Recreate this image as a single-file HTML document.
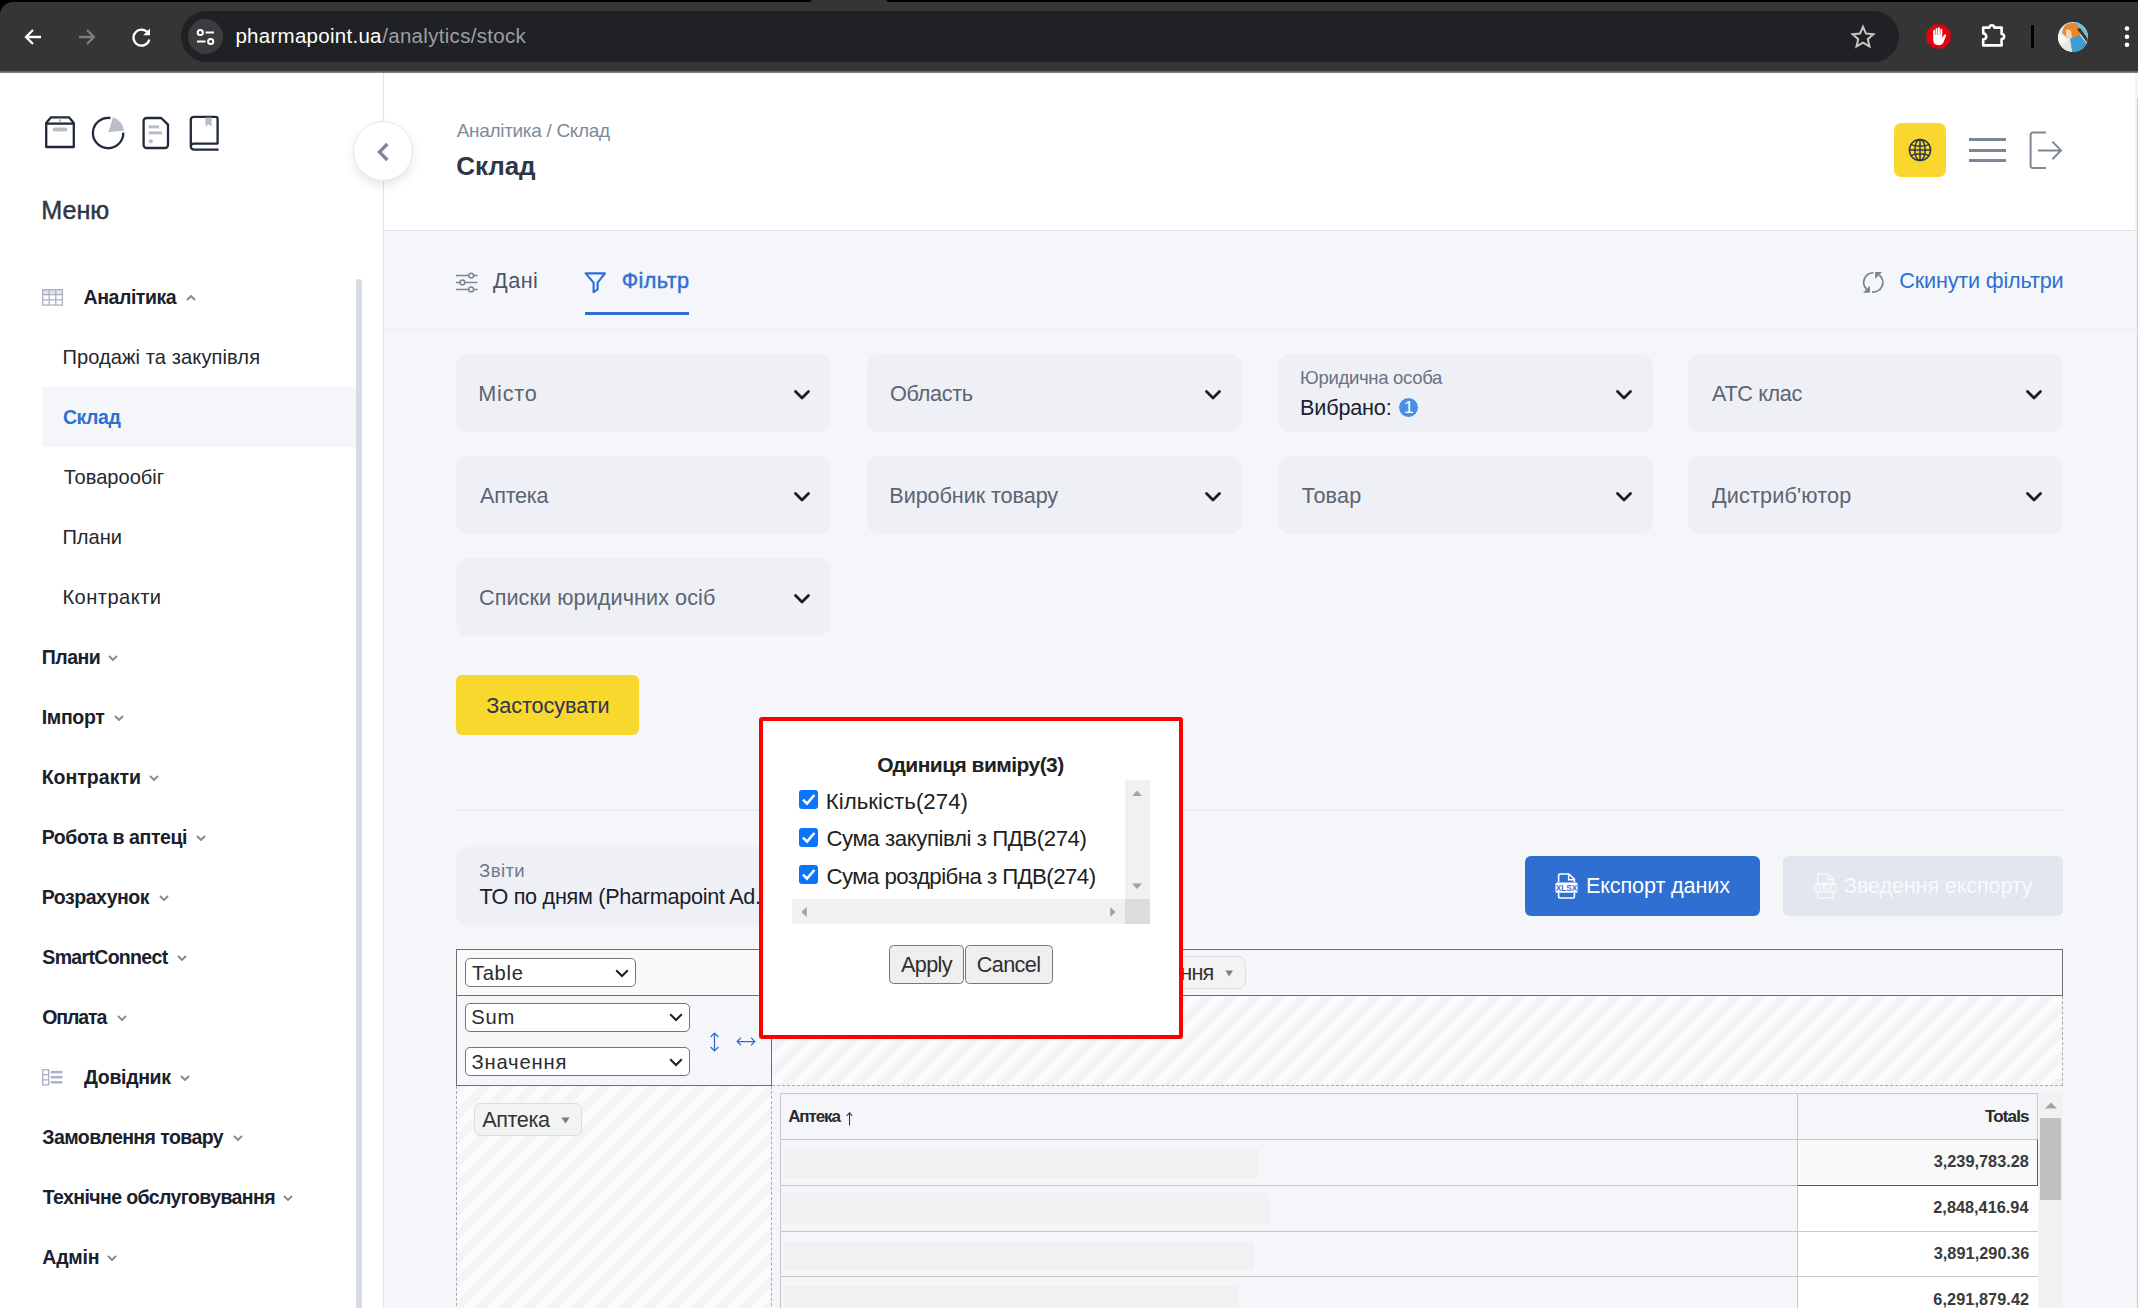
<!DOCTYPE html><html lang="uk"><head><meta charset="utf-8"><title>Склад — Pharmapoint</title><style>

*{box-sizing:border-box;margin:0;padding:0}
html,body{width:2138px;height:1308px;overflow:hidden;background:#fff}
body{font-family:"Liberation Sans",sans-serif;position:relative;color:#1a202c}
.abs,.t,svg.i{position:absolute}
.t{white-space:nowrap;display:block}
.med{-webkit-text-stroke:0.45px currentColor}
svg.i{overflow:visible}
/* browser chrome */
#chrome{left:0;top:0;width:2138px;height:73px;background:#000}
#toolbar{left:0;top:2px;width:2138px;height:69px;background:#353535;border-top-left-radius:13px}
#tabgap{left:806px;top:0;width:86px;height:3px;background:#353535;border-radius:0 0 0 0;clip-path:polygon(0 100%,4px 60%,6px 0,80px 0,82px 60%,100% 100%)}
#tbline{left:0;top:71px;width:2138px;height:2px;background:linear-gradient(#5a5a5a,#8d8d8d)}
#omni{left:181px;top:11px;width:1718px;height:51px;border-radius:26px;background:#202124}
#tune{left:188px;top:19px;width:35px;height:35px;border-radius:50%;background:#3b3c3e}
/* sidebar */
#side{left:0;top:73px;width:383px;height:1235px;background:#fff}
#sideline{left:383px;top:73px;width:1px;height:1235px;background:#dfe3ea}
#sidescroll{left:356px;top:279px;width:6px;height:1040px;border-radius:3px;background:#d5dce6}
#active{left:42px;top:387px;width:314px;height:60px;background:#f5f6fa}
#collapse{left:353px;top:121px;width:60px;height:60px;border-radius:50%;background:#fff;border:1px solid #e3e7ee;box-shadow:0 5px 10px rgba(60,70,90,.12)}
/* main */
#main{left:384px;top:73px;width:1754px;height:1235px;background:#f5f6fa}
#head{left:384px;top:73px;width:1754px;height:157px;background:#fff}
#headline{left:384px;top:230px;width:1754px;height:1px;background:#dde2ea}
#tabline{left:384px;top:329px;width:1754px;height:1px;background:#eceef2}
#tabul{left:585px;top:312px;width:104px;height:3px;background:#2f6fd1}
#rightedge{left:2135px;top:73px;width:3px;height:1235px;background:#f3f4f7}
#rightedge2{left:2137px;top:98px;width:1px;height:1210px;background:#c9ccd2}
.sel{background:#eef0f5;border-radius:12px;width:374.5px;height:78px}
#lang{left:1894px;top:123px;width:52px;height:54px;border-radius:7px;background:#f9d72f}
.hb{left:1969px;width:37px;height:3px;background:#7b8799}
#applybtn{left:456px;top:675px;width:183px;height:60px;border-radius:6px;background:#f9d82d}
#divider{left:456px;top:810px;width:1607px;height:1px;background:#e6e9ee}
#zv{left:456px;top:847px;width:375px;height:78px;border-radius:12px;background:#eef0f5}
#exp1{left:1525px;top:856px;width:235px;height:60px;border-radius:6px;background:#2f6fd1}
#exp2{left:1783px;top:856px;width:280px;height:60px;border-radius:6px;background:#e2e6ee}
.badge{left:1397.6px;top:396.5px;width:21.8px;height:21.8px;border-radius:50%;background:#4a90e2;border:1px solid #fff}
/* pivot */
#pvtTop{left:456px;top:949px;width:1607px;height:47px;border:1px solid #6d6d6d;background:#f5f6fa}
#pvtTL{left:457px;top:950px;width:314px;height:45px;background:#f9f9f9}
#pvtLeft{left:456px;top:996px;width:316px;height:90px;border:1px solid #6d6d6d;border-top:none;background:#f5f6fa}
#pvtTopSep{left:771px;top:949px;width:1px;height:47px;background:#6d6d6d}
.hatch{background-color:#fafbfd;background-image:linear-gradient(135deg,#f3f4f6 25%,transparent 25%,transparent 50%,#f3f4f6 50%,#f3f4f6 75%,transparent 75%);background-size:24px 24px}
#pvtCols{left:772px;top:996px;width:1291px;height:90px;border-right:1px dashed #a9a9a9;border-bottom:1px dashed #a9a9a9}
#pvtRows{left:456px;top:1086px;width:316px;height:230px;border-left:1px dashed #a9a9a9;border-right:1px dashed #a9a9a9}
.psel{background:#fff;border:1px solid #767676;border-radius:5px;height:29px}
.chip{background:#f3f3f3;border:1px solid #dedede;border-radius:6px}
#res{left:780px;top:1093px;width:1258px;height:230px;border:1px solid #c8c8c8;border-bottom:none;background:#f5f6fa}
.rl{left:781px;width:1257px;height:1px;background:#c8c8c8}
.bar{left:784px;height:29px;background:#f1f1f1}
#totcol{left:1797px;top:1093px;width:1px;height:230px;background:#c8c8c8}
.tc{left:1798px;width:240px;background:#fff}
#tc1{left:1797px;top:1139px;width:241px;height:47px;background:#f9f9f9;border:1px solid #5a5a5a;border-top-color:#c8c8c8;border-left-color:#c8c8c8}
#vtrack{left:2039px;top:1093px;width:24px;height:230px;background:#f1f1f1}
#vthumb{left:2040px;top:1118px;width:21px;height:82px;background:#c1c1c1}
/* modal */
#modal{left:759px;top:717px;width:424px;height:322px;background:#fff;border:4px solid #ff0000;border-radius:3px}
#mlist{left:792px;top:780px;width:358px;height:144px;background:#fff}
#mvs{left:1125px;top:780px;width:25px;height:119px;background:#f1f1f1}
#mhs{left:792px;top:899px;width:333px;height:25px;background:#f1f1f1}
#mcorner{left:1125px;top:899px;width:25px;height:25px;background:#dcdcdc}
.cb{width:19px;height:19px;border-radius:3px;background:#0b74fb}
.mbtn{top:945px;height:39.2px;background:#efefef;border:1.2px solid #787878;border-radius:4.5px}

</style></head><body>
<div class="abs" id="chrome"></div><div class="abs" id="toolbar"></div><div class="abs" id="tabgap"></div><div class="abs" id="tbline"></div>
<div class="abs" id="omni"></div><div class="abs" id="tune"></div>
<svg class="i" style="left:24px;top:28px" width="18" height="18" viewBox="0 0 18 18" ><path d="M17 9 H2.5 M9 2 L2 9 L9 16" fill="none" stroke="#fff" stroke-width="2.3"/></svg>
<svg class="i" style="left:78px;top:28px" width="18" height="18" viewBox="0 0 18 18" ><path d="M1 9 H15.5 M9 2 L16 9 L9 16" fill="none" stroke="#7d7d7d" stroke-width="2.3"/></svg>
<svg class="i" style="left:131px;top:27px" width="21" height="21" viewBox="0 0 21 21" ><path d="M17.2 6.2 A8 8 0 1 0 18.3 12.4" fill="none" stroke="#fff" stroke-width="2.3"/><path d="M19 1.5 V8.3 H12.2 Z" fill="#fff"/></svg>
<svg class="i" style="left:196px;top:28px" width="19" height="18" viewBox="0 0 19 18" ><g fill="none" stroke="#fff" stroke-width="2"><circle cx="4.3" cy="4.5" r="2.6"/><path d="M9.5 4.5 H18"/><circle cx="14.7" cy="13.5" r="2.6"/><path d="M1 13.5 H9.5"/></g></svg>
<span class="t" style="top:26.0px;font-size:20.5px;line-height:20.5px;color:#ffffff;left:235.4px;letter-spacing:0.28px;">pharmapoint.ua</span>
<span class="t" style="top:26.0px;font-size:20.5px;line-height:20.5px;color:#9aa0a6;left:382.2px;letter-spacing:0.31px;">/analytics/stock</span>
<svg class="i" style="left:1851px;top:25px" width="24" height="23" viewBox="0 0 24 23" ><path d="M12 1.8 L15 8.6 L22.4 9.3 L16.8 14.2 L18.5 21.4 L12 17.6 L5.5 21.4 L7.2 14.2 L1.6 9.3 L9 8.6 Z" fill="none" stroke="#c7c7c7" stroke-width="2" stroke-linejoin="miter"/></svg>
<svg class="i" style="left:1926px;top:24px" width="25" height="25" viewBox="0 0 25 25" ><path d="M7.6 0.5 H17.4 L24.5 7.6 V17.4 L17.4 24.5 H7.6 L0.5 17.4 V7.6 Z" fill="#e4000f"/><path d="M7.2 14 V6.8 a0.95 0.95 0 0 1 1.9 0 V11 h0.5 V4.9 a0.95 0.95 0 0 1 1.9 0 V11 h0.5 V4.2 a0.95 0.95 0 0 1 1.9 0 V11 h0.5 V5.6 a0.95 0.95 0 0 1 1.9 0 V14.2 l1.9 -3.4 a1 1 0 0 1 1.8 0.9 L17.4 18.6 q-1.3 2.7 -4.9 2.7 q-5.3 0 -5.3 -5.2 Z" fill="#fff"/></svg>
<svg class="i" style="left:1980px;top:22px" width="27" height="27" viewBox="0 0 27 27" ><path d="M3.2 5.6 H9.4 a2.4 2.4 0 0 1 4.8 0 H21.6 V12 a2.5 2.5 0 0 1 0 5 V23.4 H3.2 V17.6 a3.1 3.1 0 0 0 0 -6.2 Z" fill="none" stroke="#fff" stroke-width="2.6" stroke-linejoin="round"/></svg>
<div class="abs" style="left:2031px;top:25px;width:3px;height:23px;background:#000;border-radius:1px"></div>
<svg class="i" style="left:2058px;top:21.5px" width="30" height="30" viewBox="0 0 30 30" ><defs><clipPath id="av"><circle cx="15" cy="15" r="15"/></clipPath></defs><g clip-path="url(#av)"><rect width="30" height="30" fill="#e6f0f3"/><path d="M16 0 H30 V16 L22 12 Z" fill="#62c4dc"/><path d="M0 12 L7 14 L10 30 H0 Z" fill="#f7f7f5"/><path d="M4 11 Q5 2 12 1 Q19 0 21 6 L22 13 L17 17 L9 16 Z" fill="#e8872b"/><path d="M8 8 Q11 6 13 9 L14 15 Q11 19 8 15 Z" fill="#f5d2b2"/><path d="M12 17 L22 13 L29 22 L22 30 H14 Z" fill="#3b9ed2"/><path d="M19 7 L22 6 L30 17 V22 Z" fill="#4a3122"/><path d="M3 22 L12 19 L14 30 H6 Z" fill="#ece6e2"/></g></svg>
<svg class="i" style="left:2124px;top:26px" width="6" height="22" viewBox="0 0 6 22" ><g fill="#fff"><circle cx="3" cy="2.5" r="2.3"/><circle cx="3" cy="10.7" r="2.3"/><circle cx="3" cy="18.8" r="2.3"/></g></svg>
<div class="abs" id="side"></div><div class="abs" id="main"></div><div class="abs" id="sideline"></div>
<div class="abs" id="active"></div><div class="abs" id="sidescroll"></div>
<svg class="i" style="left:44px;top:115px" width="32" height="34" viewBox="0 0 32 34" ><g fill="none" stroke="#1f2a3b" stroke-width="2.3" stroke-linejoin="round"><path d="M2.2 8 L7 2.3 H25 L29.8 8 V32 H2.2 Z"/><path d="M2.2 8.6 H29.8"/></g><rect x="8.6" y="12.4" width="14.8" height="4" rx="2" fill="#b9bdc5"/><rect x="15" y="3.4" width="2" height="3.6" fill="#b9bdc5"/></svg>
<svg class="i" style="left:90px;top:115px" width="36" height="36" viewBox="0 0 36 36" ><path d="M20.4 3 A15.2 15.2 0 1 0 33.3 17.6" fill="none" stroke="#1f2a3b" stroke-width="2.3"/><path d="M18.4 17.2 L23 2.2 A15.6 15.6 0 0 1 34 15.4 Z" fill="#b9bdc5"/></svg>
<svg class="i" style="left:141px;top:115px" width="30" height="36" viewBox="0 0 30 36" ><path d="M5.6 3 H20.2 L27 9.6 V30 a3 3 0 0 1 -3 3 H5.6 a3 3 0 0 1 -3 -3 V6 a3 3 0 0 1 3 -3 Z" fill="none" stroke="#1f2a3b" stroke-width="2.3" stroke-linejoin="round"/><rect x="7.6" y="10.4" width="10.4" height="3" fill="#b9bdc5"/><rect x="7.6" y="16.4" width="13.4" height="3" fill="#b9bdc5"/><circle cx="9.8" cy="26.3" r="2.1" fill="#b9bdc5"/></svg>
<svg class="i" style="left:188px;top:114px" width="32" height="38" viewBox="0 0 32 38" ><path d="M30.6 35.6 H6 a3.2 3.2 0 0 1 -3.2 -3.2 V5.8 a3 3 0 0 1 3 -3 H27.6 a2 2 0 0 1 2 2 V29.6 H6 a3 3 0 0 0 -3.2 3" fill="none" stroke="#1f2a3b" stroke-width="2.3" stroke-linejoin="round"/><path d="M17.4 3.6 H23.6 V12.4 L20.5 10.2 L17.4 12.4 Z" fill="#b9bdc5"/></svg>
<span class="t med" style="top:198.0px;font-size:25.23px;line-height:25.23px;color:#2d3748;font-weight:500;left:41.2px;letter-spacing:-0.04px;">Меню</span>
<svg class="i" style="left:41.6px;top:289px" width="21" height="17" viewBox="0 0 21 17" ><rect x="0.7" y="0.7" width="19.6" height="5" fill="#e1e3ea"/><g fill="none" stroke="#a9aec2" stroke-width="1.3"><rect x="0.7" y="0.7" width="19.6" height="15.4"/><path d="M0.7 5.7 H20.3 M0.7 10.9 H20.3 M7.2 0.7 V16 M13.8 0.7 V16"/></g></svg>
<span class="t" style="top:288.0px;font-size:19.5px;line-height:19.5px;color:#1a202c;font-weight:700;left:83.6px;letter-spacing:-0.45px;">Аналітика</span>
<svg class="i" style="left:186.3px;top:295px" width="10" height="6" viewBox="0 0 10 6" ><path d="M1 5 L5 1 L9 5" fill="none" stroke="#7d8796" stroke-width="1.8"/></svg>
<span class="t" style="top:347.0px;font-size:20.09px;line-height:20.09px;color:#23272f;left:62.4px;letter-spacing:0.09px;">Продажі та закупівля</span>
<span class="t" style="top:408.0px;font-size:19.5px;line-height:19.5px;color:#2f6fd1;font-weight:700;left:62.9px;letter-spacing:-0.44px;">Склад</span>
<span class="t" style="top:467.0px;font-size:20.09px;line-height:20.09px;color:#23272f;left:63.8px;letter-spacing:0.01px;">Товарообіг</span>
<span class="t" style="top:527.0px;font-size:20.09px;line-height:20.09px;color:#23272f;left:62.4px;letter-spacing:0.01px;">Плани</span>
<span class="t" style="top:587.0px;font-size:20.09px;line-height:20.09px;color:#23272f;left:62.4px;letter-spacing:0.47px;">Контракти</span>
<span class="t" style="top:648.0px;font-size:19.5px;line-height:19.5px;color:#1a202c;font-weight:700;left:41.7px;letter-spacing:-0.48px;">Плани</span>
<svg class="i" style="left:108px;top:655.2px" width="10" height="6" viewBox="0 0 10 6" ><path d="M1 1 L5 5 L9 1" fill="none" stroke="#7d8796" stroke-width="1.8"/></svg>
<span class="t" style="top:708.0px;font-size:19.5px;line-height:19.5px;color:#1a202c;font-weight:700;left:41.7px;letter-spacing:-0.32px;">Імпорт</span>
<svg class="i" style="left:114.4px;top:715.2px" width="10" height="6" viewBox="0 0 10 6" ><path d="M1 1 L5 5 L9 1" fill="none" stroke="#7d8796" stroke-width="1.8"/></svg>
<span class="t" style="top:768.0px;font-size:19.5px;line-height:19.5px;color:#1a202c;font-weight:700;left:41.7px;letter-spacing:0.01px;">Контракти</span>
<svg class="i" style="left:149px;top:775.2px" width="10" height="6" viewBox="0 0 10 6" ><path d="M1 1 L5 5 L9 1" fill="none" stroke="#7d8796" stroke-width="1.8"/></svg>
<span class="t" style="top:828.0px;font-size:19.5px;line-height:19.5px;color:#1a202c;font-weight:700;left:41.7px;letter-spacing:-0.41px;">Робота в аптеці</span>
<svg class="i" style="left:196px;top:835.2px" width="10" height="6" viewBox="0 0 10 6" ><path d="M1 1 L5 5 L9 1" fill="none" stroke="#7d8796" stroke-width="1.8"/></svg>
<span class="t" style="top:888.0px;font-size:19.5px;line-height:19.5px;color:#1a202c;font-weight:700;left:41.7px;letter-spacing:-0.46px;">Розрахунок</span>
<svg class="i" style="left:159px;top:895.2px" width="10" height="6" viewBox="0 0 10 6" ><path d="M1 1 L5 5 L9 1" fill="none" stroke="#7d8796" stroke-width="1.8"/></svg>
<span class="t" style="top:948.0px;font-size:19.5px;line-height:19.5px;color:#1a202c;font-weight:700;left:42.3px;letter-spacing:-0.67px;">SmartConnect</span>
<svg class="i" style="left:177px;top:955.2px" width="10" height="6" viewBox="0 0 10 6" ><path d="M1 1 L5 5 L9 1" fill="none" stroke="#7d8796" stroke-width="1.8"/></svg>
<span class="t" style="top:1008.0px;font-size:19.5px;line-height:19.5px;color:#1a202c;font-weight:700;left:42.3px;letter-spacing:-1.10px;">Оплата</span>
<svg class="i" style="left:117px;top:1015.2px" width="10" height="6" viewBox="0 0 10 6" ><path d="M1 1 L5 5 L9 1" fill="none" stroke="#7d8796" stroke-width="1.8"/></svg>
<svg class="i" style="left:42px;top:1069px" width="21" height="17" viewBox="0 0 21 17" ><g fill="none" stroke="#aab0c6" stroke-width="1.3"><rect x="0.7" y="0.7" width="6" height="15.2"/><path d="M0.7 5.7 H6.7 M0.7 10.8 H6.7"/></g><g fill="#aab0c6"><rect x="8.8" y="1.9" width="11.6" height="2.4"/><rect x="8.8" y="7" width="11.6" height="2.4"/><rect x="8.8" y="12.1" width="11.6" height="2.4"/></g></svg>
<span class="t" style="top:1068.0px;font-size:19.5px;line-height:19.5px;color:#1a202c;font-weight:700;left:84.0px;letter-spacing:-0.33px;">Довідник</span>
<svg class="i" style="left:180px;top:1075.2px" width="10" height="6" viewBox="0 0 10 6" ><path d="M1 1 L5 5 L9 1" fill="none" stroke="#7d8796" stroke-width="1.8"/></svg>
<span class="t" style="top:1128.0px;font-size:19.5px;line-height:19.5px;color:#1a202c;font-weight:700;left:42.3px;letter-spacing:-0.57px;">Замовлення товару</span>
<svg class="i" style="left:233.2px;top:1135.2px" width="10" height="6" viewBox="0 0 10 6" ><path d="M1 1 L5 5 L9 1" fill="none" stroke="#7d8796" stroke-width="1.8"/></svg>
<span class="t" style="top:1188.0px;font-size:19.5px;line-height:19.5px;color:#1a202c;font-weight:700;left:42.7px;letter-spacing:-0.60px;">Технічне обслуговування</span>
<svg class="i" style="left:283.3px;top:1195.2px" width="10" height="6" viewBox="0 0 10 6" ><path d="M1 1 L5 5 L9 1" fill="none" stroke="#7d8796" stroke-width="1.8"/></svg>
<span class="t" style="top:1248.0px;font-size:19.5px;line-height:19.5px;color:#1a202c;font-weight:700;left:42.3px;letter-spacing:-0.23px;">Адмін</span>
<svg class="i" style="left:106.9px;top:1255.2px" width="10" height="6" viewBox="0 0 10 6" ><path d="M1 1 L5 5 L9 1" fill="none" stroke="#7d8796" stroke-width="1.8"/></svg>
<div class="abs" id="head"></div><div class="abs" id="headline"></div>
<div class="abs" id="rightedge"></div><div class="abs" id="rightedge2"></div>
<span class="t" style="top:121.0px;font-size:19.05px;line-height:19.05px;color:#7e8a9c;left:456.7px;letter-spacing:-0.33px;">Аналітика / Склад</span>
<span class="t" style="top:153.0px;font-size:26px;line-height:26px;color:#2d3748;font-weight:700;left:456.2px;letter-spacing:-0.05px;">Склад</span>
<div class="abs" id="lang"></div>
<svg class="i" style="left:1908px;top:138px" width="24" height="24" viewBox="0 0 24 24" ><g fill="none" stroke="#2d3748" stroke-width="1.5"><circle cx="12" cy="12" r="10.6"/><ellipse cx="12" cy="12" rx="5.2" ry="10.6"/><path d="M12 1.4 V22.6 M1.4 12 H22.6 M3 6.6 Q12 10 21 6.6 M3 17.4 Q12 14 21 17.4"/></g></svg>
<div class="abs hb" style="top:138px"></div>
<div class="abs hb" style="top:149px"></div>
<div class="abs hb" style="top:159px"></div>
<svg class="i" style="left:2028px;top:130px" width="36" height="41" viewBox="0 0 36 41" ><g fill="none" stroke="#7b8799" stroke-width="2"><path d="M18 2.6 H5 a2.4 2.4 0 0 0 -2.4 2.4 V35.6 a2.4 2.4 0 0 0 2.4 2.4 H18"/><path d="M10 20.4 H32.6 M24.4 11.6 L33 20.4 L24.4 29.2"/></g></svg>
<div class="abs" id="collapse"></div>
<svg class="i" style="left:376px;top:141.5px" width="14" height="20" viewBox="0 0 14 20" ><path d="M11.4 2 L3.4 10 L11.4 18" fill="none" stroke="#7b8799" stroke-width="3.3"/></svg>
<div class="abs" id="tabline"></div><div class="abs" id="tabul"></div>
<svg class="i" style="left:456px;top:272px" width="22" height="22" viewBox="0 0 22 22" ><g fill="none" stroke="#7b8594" stroke-width="1.5"><path d="M0 3.6 H12.4 M18 3.6 H21.5 M0 10.4 H3.6 M9.2 10.4 H21.5 M0 17.4 H12.4 M18 17.4 H21.5"/><circle cx="15.2" cy="3.6" r="2.4"/><circle cx="6.4" cy="10.4" r="2.4"/><circle cx="15.2" cy="17.4" r="2.4"/></g></svg>
<span class="t" style="top:270.0px;font-size:21.63px;line-height:21.63px;color:#4a5568;left:493.0px;letter-spacing:0.50px;">Дані</span>
<svg class="i" style="left:584px;top:271px" width="23" height="23" viewBox="0 0 23 23" ><path d="M1.6 2.4 H21 L13.6 11.6 V18.4 L9.6 21.2 V11.6 Z" fill="none" stroke="#2f6fd1" stroke-width="2.1" stroke-linejoin="round"/></svg>
<span class="t med" style="top:270.0px;font-size:21.63px;line-height:21.63px;color:#2f6fd1;font-weight:500;left:621.7px;letter-spacing:0.41px;">Фільтр</span>
<svg class="i" style="left:1861.1px;top:271px" width="23" height="23" viewBox="0 0 23 23" ><g fill="none" stroke="#788594" stroke-width="1.8"><path d="M12.4 1.9 A9.5 9.5 0 0 0 5.4 18"/><path d="M11 20.9 A9.5 9.5 0 0 0 18.4 4.2"/></g><path d="M2 21.7 H8.9 V14.7 Z" fill="#788594"/><path d="M14.1 1.1 H21.1 L14.1 7.9 Z" fill="#788594"/></svg>
<span class="t" style="top:270.0px;font-size:21.63px;line-height:21.63px;color:#2f6fd1;left:1899.3px;letter-spacing:-0.17px;">Скинути фільтри</span>
<div class="abs sel" style="left:456px;top:354px"></div>
<span class="t" style="top:383.0px;font-size:21.63px;line-height:21.63px;color:#5b6472;left:478.3px;letter-spacing:0.76px;">Місто</span>
<svg class="i" style="left:793.8px;top:389.5px" width="16" height="10" viewBox="0 0 16 10" ><path d="M1.5 1.5 L8 8 L14.5 1.5" fill="none" stroke="#1d1d1f" stroke-width="2.8" stroke-linecap="round" stroke-linejoin="round"/></svg>
<div class="abs sel" style="left:867px;top:354px"></div>
<span class="t" style="top:383.0px;font-size:21.63px;line-height:21.63px;color:#5b6472;left:890.0px;letter-spacing:-0.30px;">Область</span>
<svg class="i" style="left:1204.8px;top:389.5px" width="16" height="10" viewBox="0 0 16 10" ><path d="M1.5 1.5 L8 8 L14.5 1.5" fill="none" stroke="#1d1d1f" stroke-width="2.8" stroke-linecap="round" stroke-linejoin="round"/></svg>
<div class="abs sel" style="left:1278px;top:354px"></div>
<span class="t" style="top:369.0px;font-size:18.54px;line-height:18.54px;color:#6b7280;left:1300.1px;letter-spacing:-0.32px;">Юридична особа</span>
<span class="t" style="top:397.0px;font-size:21.63px;line-height:21.63px;color:#1a202c;left:1300.1px;letter-spacing:-0.19px;">Вибрано:</span>
<div class="abs badge"></div>
<span class="t" style="top:399.0px;font-size:17.3px;line-height:17.3px;color:#ffffff;left:1403.9px;">1</span>
<svg class="i" style="left:1615.8px;top:389.5px" width="16" height="10" viewBox="0 0 16 10" ><path d="M1.5 1.5 L8 8 L14.5 1.5" fill="none" stroke="#1d1d1f" stroke-width="2.8" stroke-linecap="round" stroke-linejoin="round"/></svg>
<div class="abs sel" style="left:1688px;top:354px"></div>
<span class="t" style="top:383.0px;font-size:21.63px;line-height:21.63px;color:#5b6472;left:1712.0px;letter-spacing:-0.34px;">АТС клас</span>
<svg class="i" style="left:2025.8px;top:389.5px" width="16" height="10" viewBox="0 0 16 10" ><path d="M1.5 1.5 L8 8 L14.5 1.5" fill="none" stroke="#1d1d1f" stroke-width="2.8" stroke-linecap="round" stroke-linejoin="round"/></svg>
<div class="abs sel" style="left:456px;top:456px"></div>
<span class="t" style="top:485.0px;font-size:21.63px;line-height:21.63px;color:#5b6472;left:480.0px;letter-spacing:-0.25px;">Аптека</span>
<svg class="i" style="left:793.8px;top:491.5px" width="16" height="10" viewBox="0 0 16 10" ><path d="M1.5 1.5 L8 8 L14.5 1.5" fill="none" stroke="#1d1d1f" stroke-width="2.8" stroke-linecap="round" stroke-linejoin="round"/></svg>
<div class="abs sel" style="left:867px;top:456px"></div>
<span class="t" style="top:485.0px;font-size:21.63px;line-height:21.63px;color:#5b6472;left:889.3px;letter-spacing:-0.08px;">Виробник товару</span>
<svg class="i" style="left:1204.8px;top:491.5px" width="16" height="10" viewBox="0 0 16 10" ><path d="M1.5 1.5 L8 8 L14.5 1.5" fill="none" stroke="#1d1d1f" stroke-width="2.8" stroke-linecap="round" stroke-linejoin="round"/></svg>
<div class="abs sel" style="left:1278px;top:456px"></div>
<span class="t" style="top:485.0px;font-size:21.63px;line-height:21.63px;color:#5b6472;left:1301.7px;letter-spacing:0.18px;">Товар</span>
<svg class="i" style="left:1615.8px;top:491.5px" width="16" height="10" viewBox="0 0 16 10" ><path d="M1.5 1.5 L8 8 L14.5 1.5" fill="none" stroke="#1d1d1f" stroke-width="2.8" stroke-linecap="round" stroke-linejoin="round"/></svg>
<div class="abs sel" style="left:1688px;top:456px"></div>
<span class="t" style="top:485.0px;font-size:21.63px;line-height:21.63px;color:#5b6472;left:1712.0px;letter-spacing:0.15px;">Дистриб'ютор</span>
<svg class="i" style="left:2025.8px;top:491.5px" width="16" height="10" viewBox="0 0 16 10" ><path d="M1.5 1.5 L8 8 L14.5 1.5" fill="none" stroke="#1d1d1f" stroke-width="2.8" stroke-linecap="round" stroke-linejoin="round"/></svg>
<div class="abs sel" style="left:456px;top:558px"></div>
<span class="t" style="top:587.0px;font-size:21.63px;line-height:21.63px;color:#5b6472;left:479.0px;letter-spacing:0.07px;">Списки юридичних осіб</span>
<svg class="i" style="left:793.8px;top:593.5px" width="16" height="10" viewBox="0 0 16 10" ><path d="M1.5 1.5 L8 8 L14.5 1.5" fill="none" stroke="#1d1d1f" stroke-width="2.8" stroke-linecap="round" stroke-linejoin="round"/></svg>
<div class="abs" id="applybtn"></div>
<span class="t" style="top:695.0px;font-size:21.63px;line-height:21.63px;color:#2b3550;left:486.3px;letter-spacing:-0.06px;">Застосувати</span>
<div class="abs" id="divider"></div>
<div class="abs" id="zv"></div>
<span class="t" style="top:862.0px;font-size:18.54px;line-height:18.54px;color:#6b7a90;left:479.1px;letter-spacing:0.38px;">Звіти</span>
<span class="t" style="top:886.0px;font-size:21.63px;line-height:21.63px;color:#1a202c;left:479.5px;letter-spacing:-0.29px;">ТО по дням (Pharmapoint Ad.</span>
<div class="abs" id="exp1"></div>
<svg class="i" style="left:1555px;top:873px" width="23" height="26" viewBox="0 0 23 26" ><path d="M3.6 9 V2.4 a1.4 1.4 0 0 1 1.4 -1.4 H14 L19.4 6.4 V9 M3.6 20 V23.6 a1.4 1.4 0 0 0 1.4 1.4 H18 a1.4 1.4 0 0 0 1.4 -1.4 V20" fill="none" stroke="#ffffff" stroke-width="1.6"/><path d="M13.6 1.4 V6.8 H19" fill="none" stroke="#ffffff" stroke-width="1.4"/><rect x="0.4" y="9.4" width="22.2" height="10.4" rx="1.6" fill="#ffffff"/><text x="11.5" y="17.6" font-family="Liberation Sans, sans-serif" font-size="8.2" font-weight="700" text-anchor="middle" fill="#2f6fd1">XLSX</text></svg>
<span class="t" style="top:875.0px;font-size:21.63px;line-height:21.63px;color:#ffffff;left:1585.9px;letter-spacing:-0.12px;">Експорт даних</span>
<div class="abs" id="exp2"></div>
<svg class="i" style="left:1814px;top:873px" width="23" height="26" viewBox="0 0 23 26" ><path d="M3.6 9 V2.4 a1.4 1.4 0 0 1 1.4 -1.4 H14 L19.4 6.4 V9 M3.6 20 V23.6 a1.4 1.4 0 0 0 1.4 1.4 H18 a1.4 1.4 0 0 0 1.4 -1.4 V20" fill="none" stroke="#f5f7fa" stroke-width="1.6"/><path d="M13.6 1.4 V6.8 H19" fill="none" stroke="#f5f7fa" stroke-width="1.4"/><rect x="0.4" y="9.4" width="22.2" height="10.4" rx="1.6" fill="#f5f7fa"/><text x="11.5" y="17.6" font-family="Liberation Sans, sans-serif" font-size="8.2" font-weight="700" text-anchor="middle" fill="#dfe3ec">XLSX</text></svg>
<span class="t" style="top:875.0px;font-size:21.63px;line-height:21.63px;color:#f7f9fc;left:1844.0px;letter-spacing:-0.14px;">Зведення експорту</span>
<div class="abs" id="pvtTop"></div><div class="abs" id="pvtTL"></div><div class="abs" id="pvtTopSep"></div><div class="abs" id="pvtLeft"></div>
<div class="abs hatch" id="pvtCols"></div><div class="abs hatch" id="pvtRows"></div>
<div class="abs psel" style="left:465px;top:958px;width:171px"></div>
<span class="t" style="top:963.0px;font-size:20.19px;line-height:20.19px;color:#2b2b2b;left:471.9px;letter-spacing:0.68px;">Table</span>
<svg class="i" style="left:614.9px;top:968.5px" width="14" height="9" viewBox="0 0 14 9" ><path d="M1.2 1.2 L7 7 L12.8 1.2" fill="none" stroke="#1d1d1f" stroke-width="2"/></svg>
<div class="abs psel" style="left:465px;top:1003px;width:225px"></div>
<span class="t" style="top:1007.0px;font-size:20.19px;line-height:20.19px;color:#2b2b2b;left:471.2px;letter-spacing:0.85px;">Sum</span>
<svg class="i" style="left:668.9px;top:1013.4px" width="14" height="9" viewBox="0 0 14 9" ><path d="M1.2 1.2 L7 7 L12.8 1.2" fill="none" stroke="#1d1d1f" stroke-width="2"/></svg>
<div class="abs psel" style="left:465px;top:1047px;width:225px"></div>
<span class="t" style="top:1052.0px;font-size:20.19px;line-height:20.19px;color:#2b2b2b;left:471.5px;letter-spacing:0.83px;">Значення</span>
<svg class="i" style="left:668.9px;top:1057.5px" width="14" height="9" viewBox="0 0 14 9" ><path d="M1.2 1.2 L7 7 L12.8 1.2" fill="none" stroke="#1d1d1f" stroke-width="2"/></svg>
<svg class="i" style="left:709.3px;top:1031.8px" width="11" height="20" viewBox="0 0 11 20" ><path d="M5.5 1.2 V18.8 M1.6 5 L5.5 1.2 L9.4 5 M1.6 15 L5.5 18.8 L9.4 15" fill="none" stroke="#2f6fd1" stroke-width="1.25"/></svg>
<svg class="i" style="left:735.5px;top:1036.2px" width="20" height="11" viewBox="0 0 20 11" ><path d="M1.2 5.5 H18.8 M5 1.6 L1.2 5.5 L5 9.4 M15 1.6 L18.8 5.5 L15 9.4" fill="none" stroke="#2f6fd1" stroke-width="1.25"/></svg>
<div class="abs chip" style="left:1120px;top:956.3px;width:126px;height:32.6px;border-radius:8px"></div>
<span class="t" style="top:962.0px;font-size:21.63px;line-height:21.63px;color:#333333;left:1124.2px;letter-spacing:-0.76px;">Значення</span>
<svg class="i" style="left:1224.5px;top:969.6px" width="9" height="7" viewBox="0 0 9 7" ><path d="M0.4 0.4 H8 L4.2 6.4 Z" fill="#808080"/></svg>
<div class="abs chip" style="left:474px;top:1103px;width:108px;height:33px"></div>
<span class="t" style="top:1109.0px;font-size:21.63px;line-height:21.63px;color:#333333;left:482.3px;letter-spacing:-0.43px;">Аптека</span>
<svg class="i" style="left:560.5px;top:1116.5px" width="9" height="7" viewBox="0 0 9 7" ><path d="M0.4 0.4 H8.6 L4.5 6.6 Z" fill="#7d7d7d"/></svg>
<div class="abs" id="res"></div>
<div class="abs tc" style="top:1186px;height:137px"></div>
<div class="abs" id="totcol"></div>
<div class="abs rl" style="top:1139px"></div>
<div class="abs rl" style="top:1185px"></div>
<div class="abs rl" style="top:1231px"></div>
<div class="abs rl" style="top:1276px"></div>
<div class="abs" id="tc1"></div>
<div class="abs bar" style="left:784px;top:1149px;width:475px;height:29px"></div>
<div class="abs bar" style="left:782px;top:1193px;width:487px;height:31px"></div>
<div class="abs bar" style="left:784px;top:1242px;width:470px;height:28px"></div>
<div class="abs bar" style="left:784px;top:1286px;width:454px;height:30px"></div>
<span class="t" style="top:1108.0px;font-size:17px;line-height:17px;color:#2a2a2a;font-weight:700;left:788.2px;letter-spacing:-1.12px;">Аптека</span>
<svg class="i" style="left:846px;top:1111.6px" width="7" height="14" viewBox="0 0 7 14" ><path d="M3.5 13.6 V1 M0.7 3.8 L3.5 0.8 L6.3 3.8" fill="none" stroke="#333" stroke-width="1.05"/></svg>
<span class="t" style="top:1108.0px;font-size:17px;line-height:17px;color:#2a2a2a;font-weight:700;left:1984.9px;letter-spacing:-0.83px;">Totals</span>
<span class="t" style="top:1153.0px;font-size:16.3px;line-height:16.3px;color:#3a3a3a;font-weight:700;left:1933.7px;letter-spacing:0.01px;">3,239,783.28</span>
<span class="t" style="top:1199.0px;font-size:16.3px;line-height:16.3px;color:#3a3a3a;font-weight:700;left:1933.3px;letter-spacing:0.01px;">2,848,416.94</span>
<span class="t" style="top:1245.0px;font-size:16.3px;line-height:16.3px;color:#3a3a3a;font-weight:700;left:1933.7px;letter-spacing:0.04px;">3,891,290.36</span>
<span class="t" style="top:1291.0px;font-size:16.3px;line-height:16.3px;color:#3a3a3a;font-weight:700;left:1933.3px;letter-spacing:0.07px;">6,291,879.42</span>
<div class="abs" id="vtrack"></div><div class="abs" id="vthumb"></div>
<svg class="i" style="left:2045px;top:1102px" width="12" height="7" viewBox="0 0 12 7" ><path d="M0 6.6 L6 0.4 L12 6.6 Z" fill="#a3a3a3"/></svg>
<div class="abs" id="modal"></div>
<span class="t" style="top:754.0px;font-size:21px;line-height:21px;color:#212121;font-weight:700;left:877.3px;letter-spacing:-0.55px;">Одиниця виміру(3)</span>
<div class="abs" id="mlist"></div><div class="abs" id="mvs"></div><div class="abs" id="mhs"></div><div class="abs" id="mcorner"></div>
<div class="abs cb" style="left:799px;top:790px"></div>
<svg class="i" style="left:799px;top:790px" width="19" height="19" viewBox="0 0 19 19" ><path d="M4 9.6 L8 13.6 L15.4 5" fill="none" stroke="#fff" stroke-width="2.6"/></svg>
<span class="t" style="top:791.0px;font-size:22.25px;line-height:22.25px;color:#212121;left:825.7px;letter-spacing:0.02px;">Кількість(274)</span>
<div class="abs cb" style="left:799px;top:827.5px"></div>
<svg class="i" style="left:799px;top:827.5px" width="19" height="19" viewBox="0 0 19 19" ><path d="M4 9.6 L8 13.6 L15.4 5" fill="none" stroke="#fff" stroke-width="2.6"/></svg>
<span class="t" style="top:828.0px;font-size:22.25px;line-height:22.25px;color:#212121;left:826.4px;letter-spacing:-0.44px;">Сума закупівлі з ПДВ(274)</span>
<div class="abs cb" style="left:799px;top:864.5px"></div>
<svg class="i" style="left:799px;top:864.5px" width="19" height="19" viewBox="0 0 19 19" ><path d="M4 9.6 L8 13.6 L15.4 5" fill="none" stroke="#fff" stroke-width="2.6"/></svg>
<span class="t" style="top:866.0px;font-size:22.25px;line-height:22.25px;color:#212121;left:826.4px;letter-spacing:-0.56px;">Сума роздрібна з ПДВ(274)</span>
<svg class="i" style="left:1132.3px;top:789.8px" width="10" height="6.5" viewBox="0 0 10 6" ><path d="M0 5.8 L5 0.3 L10 5.8 Z" fill="#a3a3a3"/></svg>
<svg class="i" style="left:1132.3px;top:883px" width="10" height="6.5" viewBox="0 0 10 6" ><path d="M0 0.2 L5 5.7 L10 0.2 Z" fill="#a3a3a3"/></svg>
<svg class="i" style="left:801px;top:906.5px" width="6" height="10" viewBox="0 0 6 10" ><path d="M5.8 0 L0.3 5 L5.8 10 Z" fill="#a3a3a3"/></svg>
<svg class="i" style="left:1110.2px;top:906.5px" width="6" height="10" viewBox="0 0 6 10" ><path d="M0.2 0 L5.7 5 L0.2 10 Z" fill="#a3a3a3"/></svg>
<div class="abs mbtn" style="left:889px;width:75.4px"></div>
<span class="t" style="top:954.0px;font-size:21.63px;line-height:21.63px;color:#2e2e2e;left:901.0px;letter-spacing:-0.65px;">Apply</span>
<div class="abs mbtn" style="left:965.4px;width:87.6px"></div>
<span class="t" style="top:954.0px;font-size:21.63px;line-height:21.63px;color:#2e2e2e;left:976.7px;letter-spacing:-0.58px;">Cancel</span>
</body></html>
